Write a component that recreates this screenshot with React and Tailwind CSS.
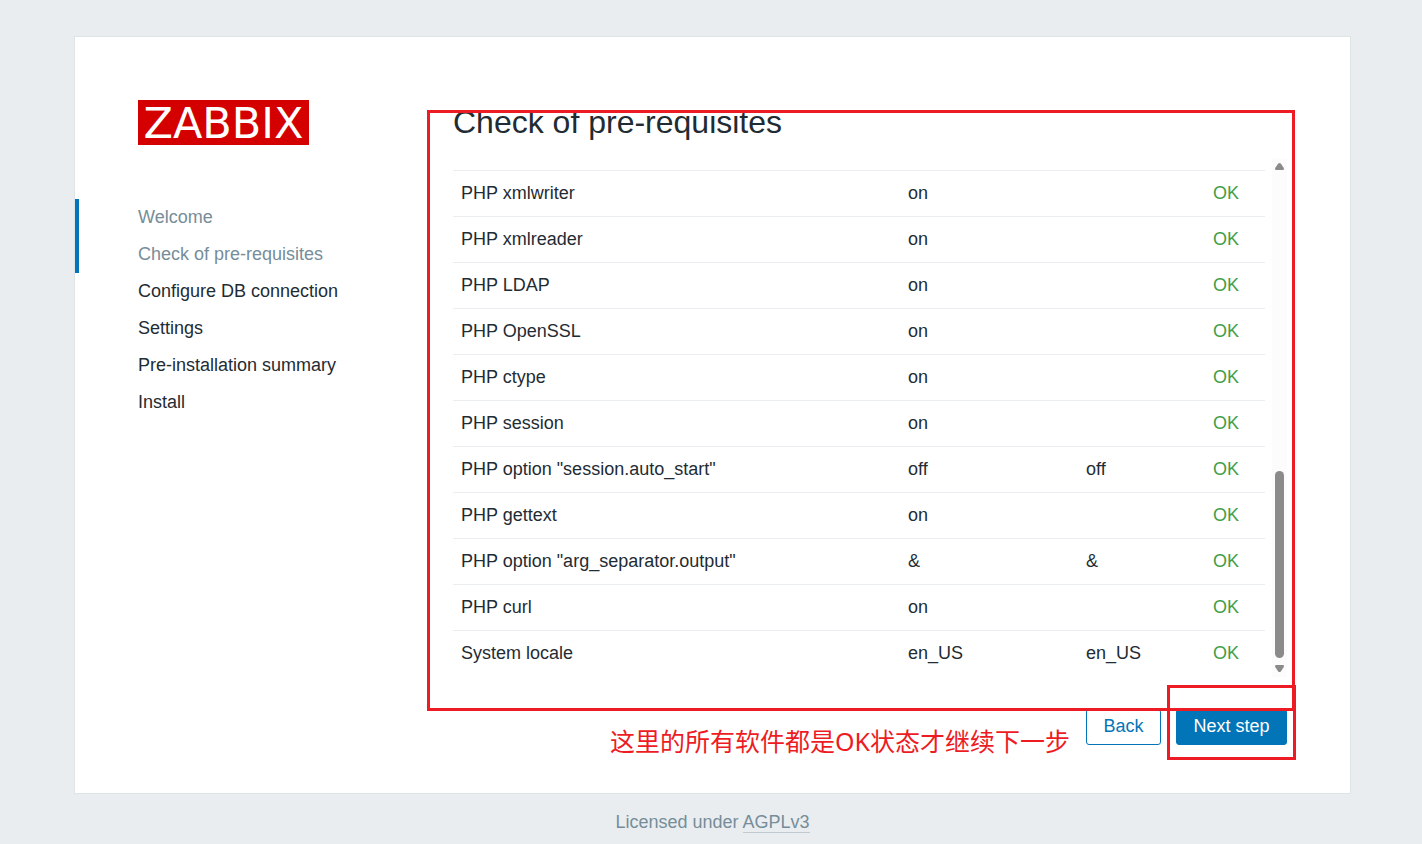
import React from 'react';

const steps = [
  { label: 'Welcome', reached: true },
  { label: 'Check of pre-requisites', reached: true },
  { label: 'Configure DB connection', reached: false },
  { label: 'Settings', reached: false },
  { label: 'Pre-installation summary', reached: false },
  { label: 'Install', reached: false },
];

const requirements = [
  ['PHP xmlwriter', 'on', ''],
  ['PHP xmlreader', 'on', ''],
  ['PHP LDAP', 'on', ''],
  ['PHP OpenSSL', 'on', ''],
  ['PHP ctype', 'on', ''],
  ['PHP session', 'on', ''],
  ['PHP option "session.auto_start"', 'off', 'off'],
  ['PHP gettext', 'on', ''],
  ['PHP option "arg_separator.output"', '&', '&'],
  ['PHP curl', 'on', ''],
  ['System locale', 'en_US', 'en_US'],
];

function Sidebar() {
  return (
    <aside className="w-[378px] shrink-0 pt-[63px]">
      <div className="ml-[63px] flex h-[45px] w-[171px] items-center justify-center bg-[#d40000] pt-0.5 font-['DejaVu_Sans',sans-serif] text-[43px] leading-none text-white">
        ZABBIX
      </div>
      <ol className="mt-[54px]">
        {steps.map(({ label, reached }) => (
          <li
            key={label}
            className={
              reached
                ? 'border-l-4 border-[#0275b8] pl-[59px] leading-[37px] text-[#768d99]'
                : 'border-l-4 border-transparent pl-[59px] leading-[37px]'
            }
          >
            {label}
          </li>
        ))}
      </ol>
    </aside>
  );
}

function RequirementsTable() {
  return (
    <table className="mt-3 w-full table-fixed border-collapse">
      <colgroup>
        <col />
        <col className="w-[178px]" />
        <col className="w-[127px]" />
        <col className="w-[60px]" />
      </colgroup>
      <tbody>
        {requirements.map(([name, current, required]) => (
          <tr key={name} className="h-[46px] border-t border-[#ebeef0]">
            <td className="px-2 pb-0.5">{name}</td>
            <td className="px-2 pb-0.5">{current}</td>
            <td className="px-2 pb-0.5">{required}</td>
            <td className="px-2 pb-0.5 text-[#429e47]">OK</td>
          </tr>
        ))}
      </tbody>
    </table>
  );
}

function Scrollbar() {
  return (
    <div className="flex w-[15px] shrink-0 flex-col items-center bg-[#fcfcfc] py-[5px]" aria-hidden="true">
      <svg width="9" height="7" viewBox="0 0 9 7" fill="#8b8b8b">
        <path d="M3.2 .6Q4.5-.4 5.8 .6L8.8 5Q9.3 7 8 7H1Q-.3 7 .2 5Z" />
      </svg>
      <div className="mt-auto h-[187px] w-[9px] rounded-full bg-[#8b8b8b]" />
      <svg className="mt-[7px]" width="9" height="7" viewBox="0 0 9 7" fill="#8b8b8b">
        <path d="M3.2 6.4Q4.5 7.4 5.8 6.4L8.8 2Q9.3 0 8 0H1Q-.3 0 .2 2Z" />
      </svg>
    </div>
  );
}

export default function App() {
  return (
    <div className="min-h-screen bg-[#e9edf0] pt-9 pr-[71px] pl-[74px] font-['Liberation_Sans',Arial,sans-serif] text-[18px] leading-7 text-[#1f2c33]">
      <main className="flex border border-[#dfe4e7] bg-white">
        <Sidebar />
        <section className="relative mr-[63px] min-w-0 flex-1 pt-[63px] pb-12">
          <h1 className="text-[32px] leading-[44px]">Check of pre-requisites</h1>
          <div className="mt-[14px] flex gap-[7px]">
            <div className="min-w-0 flex-1">
              <RequirementsTable />
            </div>
            <Scrollbar />
          </div>
          <div className="mt-8 flex justify-end">
            <div className="relative flex gap-[15px]">
              <p className="absolute top-[14px] right-full mr-4 font-['Noto_Sans','Noto_Sans_CJK_SC',sans-serif] text-[25px] leading-9 whitespace-nowrap text-[#ed1c24]">
                这里的所有软件都是OK状态才继续下一步
              </p>
              <button type="button" className="h-9 min-w-[75px] rounded-[3px] border border-[#0275b8] bg-white px-4 pb-0.5 text-[#0275b8]">
                Back
              </button>
              <div className="relative">
                <button type="button" className="h-9 min-w-[111px] rounded-[3px] border border-[#0275b8] bg-[#0275b8] px-4 pb-0.5 text-white">
                  Next step
                </button>
                <div className="pointer-events-none absolute -inset-x-[9px] -top-6 -bottom-[15px] border-3 border-[#ed1c24]" />
              </div>
            </div>
          </div>
          <div className="pointer-events-none absolute top-[73px] -right-2 bottom-[82px] -left-[26px] border-3 border-[#ed1c24]" />
        </section>
      </main>
      <footer className="mt-[14px] text-center text-[#768d99]">
        Licensed under{' '}
        <a href="https://www.gnu.org/licenses/agpl-3.0.html" className="border-b border-[#c0cad0]">
          AGPLv3
        </a>
      </footer>
    </div>
  );
}
